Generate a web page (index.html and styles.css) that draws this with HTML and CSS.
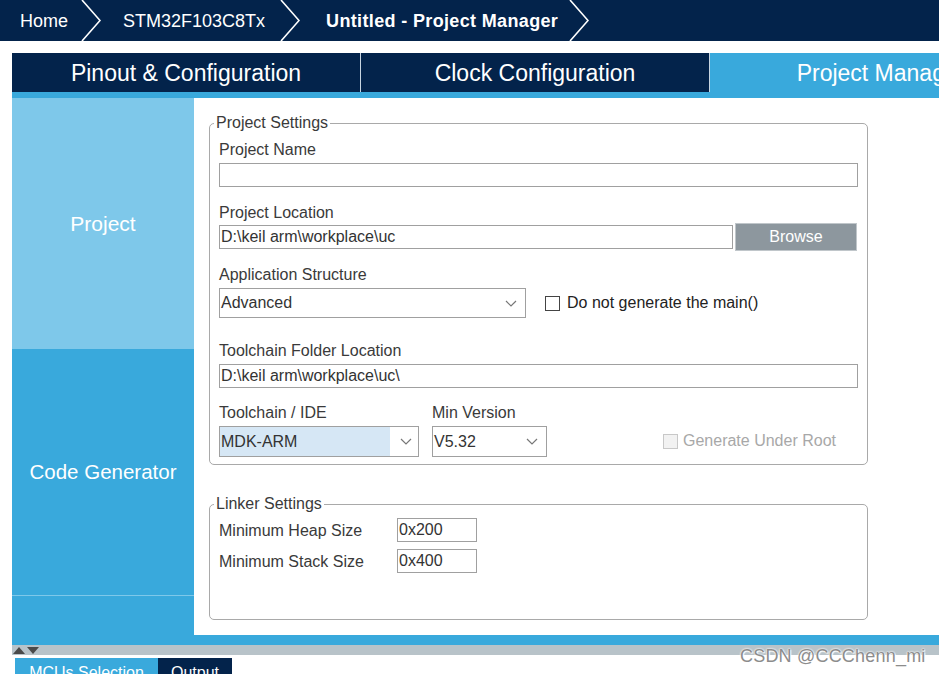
FILE: index.html
```html
<!DOCTYPE html>
<html>
<head>
<meta charset="utf-8">
<title>Project Manager</title>
<link rel="stylesheet" href="styles.css">
</head>
<body>
<div class="crumbs">
  <span class="crumb first">Home</span>
  <svg class="chev" width="20" height="41" viewBox="0 0 20 41"><polyline points="1,0 19,20.5 1,41" fill="none" stroke="#fff" stroke-width="1.6"/></svg>
  <span class="crumb">STM32F103C8Tx</span>
  <svg class="chev" width="20" height="41" viewBox="0 0 20 41"><polyline points="1,0 19,20.5 1,41" fill="none" stroke="#fff" stroke-width="1.6"/></svg>
  <span class="crumb bold">Untitled - Project Manager</span>
  <svg class="chev" width="20" height="41" viewBox="0 0 20 41"><polyline points="1,0 19,20.5 1,41" fill="none" stroke="#fff" stroke-width="1.6"/></svg>
</div>

<div class="app">
  <div class="tabs">
    <div class="tab">Pinout &amp; Configuration</div>
    <div class="tab sep">Clock Configuration</div>
    <div class="tab sep active">Project Manager</div>
  </div>
  <div class="strip"></div>

  <div class="body">
    <div class="side">
      <div class="side-item light">Project</div>
      <div class="side-item">Code Generator</div>
      <div class="side-fill"></div>
    </div>
    <div class="main">
      <fieldset class="fs fs-project">
        <legend>Project Settings</legend>
        <div class="label first">Project Name</div>
        <div class="input wide"></div>

        <div class="label loc-label">Project Location</div>
        <div class="row">
          <div class="input loc">D:\keil arm\workplace\uc</div>
          <div class="btn">Browse</div>
        </div>

        <div class="label app-label">Application Structure</div>
        <div class="row">
          <div class="select app-sel"><span class="val">Advanced</span>
            <svg class="dd" width="12" height="7" viewBox="0 0 12 7"><polyline points="1,1 6,6 11,1" fill="none" stroke="#777" stroke-width="1.2"/></svg>
          </div>
          <div class="check"><span class="box"></span>Do not generate the main()</div>
        </div>

        <div class="label gap2">Toolchain Folder Location</div>
        <div class="input wide">D:\keil arm\workplace\uc\</div>

        <div class="row tool-row">
          <div class="col">
            <div class="label">Toolchain / IDE</div>
            <div class="select ide-sel"><span class="val hl">MDK-ARM</span>
              <svg class="dd" width="12" height="7" viewBox="0 0 12 7"><polyline points="1,1 6,6 11,1" fill="none" stroke="#777" stroke-width="1.2"/></svg>
            </div>
          </div>
          <div class="col">
            <div class="label">Min Version</div>
            <div class="select ver-sel"><span class="val">V5.32</span>
              <svg class="dd" width="12" height="7" viewBox="0 0 12 7"><polyline points="1,1 6,6 11,1" fill="none" stroke="#777" stroke-width="1.2"/></svg>
            </div>
          </div>
          <div class="check disabled"><span class="box"></span>Generate Under Root</div>
        </div>
      </fieldset>

      <fieldset class="fs fs-linker">
        <legend>Linker Settings</legend>
        <div class="lrow first">
          <span class="llabel">Minimum Heap Size</span>
          <div class="input small">0x200</div>
        </div>
        <div class="lrow">
          <span class="llabel">Minimum Stack Size</span>
          <div class="input small">0x400</div>
        </div>
      </fieldset>
    </div>
  </div>

  <div class="bstrip"></div>
  <div class="graybar">
    <svg width="40" height="10" viewBox="0 0 40 10"><polygon points="1,9 7,2 13,9" fill="#4a4a4a"/><polygon points="15,2 27,2 21,9" fill="#4a4a4a"/></svg>
  </div>
  <div class="btabs">
    <div class="btab on">MCUs Selection</div>
    <div class="btab">Output</div>
  </div>
</div>
<div class="watermark">CSDN @CCChenn_mi</div>
</body>
</html>
```

FILE: styles.css
```css
html, body {
  margin: 0;
  padding: 0;
  background: #fff;
  font-family: "Liberation Sans", Arial, sans-serif;
  overflow: hidden;
  height: 674px;
}

.crumbs {
  height: 41px;
  background: #03234b;
  display: flex;
  align-items: center;
  color: #fff;
  font-size: 18px;
}
.crumb {
  margin-left: 22px;
  margin-right: 15px;
  padding-top: 2px;
  white-space: nowrap;
}
.crumb.first { margin-left: 20px; margin-right: 13px; }
.crumb.bold { font-weight: bold; margin-left: 26px; margin-right: 11px; letter-spacing: 0.35px; }
.chev { display: block; flex: none; }

.app {
  margin-top: 12px;
  padding-left: 12px;
}

.tabs {
  display: flex;
  height: 39px;
  overflow: hidden;
  background: #03234b;
}
.tab {
  flex: none;
  width: 348px;
  display: flex;
  align-items: center;
  justify-content: center;
  color: #fff;
  font-size: 23px;
  padding-top: 2px;
  box-sizing: border-box;
  white-space: nowrap;
}
.tab.sep { border-left: 1px solid #c8d4e0; width: 349px; }
.tab.active { background: #39a9dc; padding-right: 6px; }

.strip {
  height: 6px;
  background: #39a9dc;
}

.body {
  display: flex;
  height: 537px;
}
.side {
  width: 182px;
  flex: none;
  display: flex;
  flex-direction: column;
  background: #39a9dc;
}
.side-item {
  height: 246px;
  display: flex;
  align-items: center;
  justify-content: center;
  color: #fff;
  font-size: 20.5px;
  background: #39a9dc;
  border-bottom: 1px solid #7ec8ea;
}
.side-item.light {
  height: 251px;
  background: #7ec8ea;
  font-size: 21px;
  border-bottom: none;
}
.side-fill { flex: 1; }

.main {
  flex: 1;
  background: #fff;
  padding-top: 16px;
  padding-left: 15px;
}

.fs {
  margin: 0;
  width: 659px;
  box-sizing: border-box;
  border: 1px solid #a9a9a9;
  border-radius: 5px;
  padding: 0 9px 10px;
  color: #3a3a3a;
  font-size: 16px;
}
.fs legend {
  padding: 0 2px;
  margin-left: -5px;
  line-height: 18px;
  font-size: 16px;
  color: #3a3a3a;
}
.fs-project { height: 351px; }
.fs-linker { margin-top: 30px; height: 125px; }

.label {
  line-height: 18px;
  margin-top: 17px;
  margin-bottom: 3px;
  white-space: nowrap;
}
.label.first { margin-top: 9px; margin-bottom: 4px; }
.label.loc-label { margin-top: 17px; margin-bottom: 1px; }
.label.app-label { margin-top: 15px; margin-bottom: 4px; }
.label.gap2 { margin-top: 24px; margin-bottom: 4px; }

.input {
  box-sizing: border-box;
  height: 24px;
  border: 1px solid #a0a0a0;
  line-height: 22px;
  padding-left: 1px;
  color: #333;
  font-size: 16px;
  white-space: nowrap;
}
.input.wide { width: 639px; }
.input.loc { width: 514px; }
.input.small { width: 80px; }

.row {
  display: flex;
  align-items: center;
}

.btn {
  margin-left: 2px;
  width: 122px;
  height: 28px;
  box-sizing: border-box;
  background: #8d979e;
  border: 1px solid #c0c6ca;
  color: #fff;
  font-size: 16px;
  display: flex;
  align-items: center;
  justify-content: center;
}

.select {
  box-sizing: border-box;
  border: 1px solid #a0a0a0;
  display: flex;
  align-items: center;
  color: #333;
  font-size: 16px;
  background: #fff;
}
.select .val {
  flex: 1;
  padding-left: 1px;
  height: 100%;
  display: flex;
  align-items: center;
}
.select .dd { flex: none; margin-right: 8px; margin-left: 4px; }
.app-sel { width: 307px; height: 30px; }
.ide-sel { width: 200px; height: 31px; }
.ide-sel .val.hl { background: #d6e7f5; flex: none; width: 169px; }
.ide-sel .dd { margin-left: 10px; }
.ver-sel { width: 115px; height: 31px; }

.check {
  display: flex;
  align-items: center;
  margin-left: 19px;
  color: #222;
  white-space: nowrap;
}
.check .box {
  width: 13px;
  height: 13px;
  border: 1px solid #444;
  margin-right: 7px;
  background: #fff;
}
.check.disabled { color: #a8a8a8; margin-left: 116px; margin-top: 28px; }
.check.disabled .box { border-color: #c8c8c8; background: #f2f2f2; margin-right: 5px; }

.tool-row { align-items: flex-start; margin-top: 16px; }
.tool-row .label { margin-top: 0; margin-bottom: 4px; }
.tool-row .col + .col { margin-left: 13px; }

.lrow {
  display: flex;
  align-items: center;
  margin-top: 7px;
}
.lrow.first { margin-top: 5px; }
.llabel { width: 178px; flex: none; padding-top: 2px; }

.bstrip {
  height: 10px;
  background: #39a9dc;
}
.graybar {
  height: 10px;
  background: #b8c3c9;
}
.graybar svg { display: block; }

.btabs {
  display: flex;
  margin-top: 3px;
  margin-left: 3px;
}
.btab {
  height: 26px;
  padding: 4px 13px 0;
  background: #03234b;
  color: #fff;
  font-size: 16px;
  line-height: 22px;
  white-space: nowrap;
}
.btab.on {
  background: #39a9dc;
  width: 143px;
  box-sizing: border-box;
  text-align: center;
  padding: 4px 0 0;
}

.watermark {
  position: absolute;
  left: 740px;
  top: 646px;
  font-size: 18px;
  letter-spacing: 0.2px;
  color: #8c8c8c;
  text-shadow: 0 0 2px #fff, 0 0 2px #fff, 1px 1px 1px #fff;
  white-space: nowrap;
}
```
